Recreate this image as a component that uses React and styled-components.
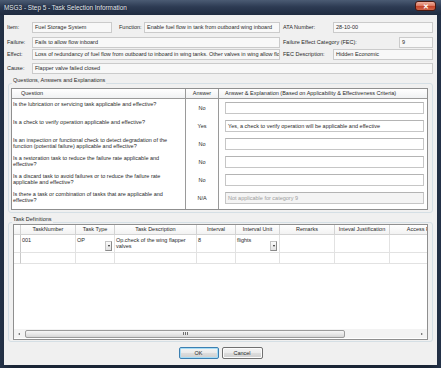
import React from "react";
import styled, { createGlobalStyle } from "styled-components";

const GlobalStyle = createGlobalStyle`
  html, body {
    margin: 0;
    padding: 0;
    overflow: hidden;
    background: #1b2638;
  }
  body {
    font-family: "Liberation Sans", Arial, sans-serif;
    color: #2a2a2a;
  }
`;

// window chrome
const Window = styled.div`
  width: 441px;
  height: 368px;
  box-sizing: border-box;
  display: flex;
  flex-direction: column;
  padding: 0 4px 3px 4px;
  background: linear-gradient(to right, #243248 0%, #1a2535 3%, #1a2535 97%, #243248 100%);
`;

const TitleBar = styled.div`
  height: 15px;
  flex: none;
  display: flex;
  align-items: center;
  justify-content: space-between;
  margin: 0 -4px;
  padding: 0 5px 0 4px;
  background: linear-gradient(to bottom, #4b5b73 0%, #2d3b53 45%, #1f2b40 100%);
`;

const Title = styled.span`
  font-family: "Liberation Sans", Arial, sans-serif;
  font-size: 6.4px;
  color: #e4e9ef;
  text-shadow: 0 0 2px #0b1320;
  white-space: nowrap;
`;

const CloseButton = styled.div`
  width: 21px;
  height: 10px;
  align-self: flex-start;
  margin-top: 1px;
  box-sizing: border-box;
  border: 1px solid #4a1810;
  border-radius: 3px;
  background: linear-gradient(to bottom, #eeb0a0 0%, #dc7a62 45%, #c4442a 55%, #d0664a 100%);
  display: flex;
  align-items: center;
  justify-content: center;
  color: #fff;
  font-size: 7px;
  font-weight: bold;
  line-height: 1;
`;

const Panel = styled.div`
  flex: 1;
  display: flex;
  flex-direction: column;
  background: #f0f0f0;
  padding: 7px 4px 0 4px;
  font-size: 5.5px;
`;

// top form
const Form = styled.div`
  display: flex;
  flex-direction: column;
  margin-left: -1px;
`;

const FormRow = styled.div`
  display: flex;
  align-items: center;
  height: 11px;
  margin-top: ${(p) => p.$gap || 0}px;
`;

const FieldLabel = styled.span`
  flex: none;
  width: ${(p) => p.$w}px;
  box-sizing: border-box;
  padding-left: ${(p) => p.$pl || 0}px;
  white-space: nowrap;
  line-height: 11px;
`;

const Field = styled.div`
  flex: none;
  width: ${(p) => p.$w}px;
  height: 11px;
  box-sizing: border-box;
  border: 1px solid #cbcbcb;
  background: #f8f8f8;
  padding: 0 2px;
  line-height: 9px;
  white-space: nowrap;
  overflow: hidden;
`;

// group boxes
const Group = styled.div`
  position: relative;
  margin-top: ${(p) => p.$mt}px;
  border: 1px solid #d5dfe5;
  border-radius: 3px;
  padding: ${(p) => p.$pad};
`;

const Caption = styled.span`
  position: absolute;
  top: -7px;
  left: 3px;
  padding: 0 1px;
  background: #f0f0f0;
  line-height: 7px;
  white-space: nowrap;
`;

// questions table
const QTable = styled.div`
  height: 122px;
  box-sizing: border-box;
  display: flex;
  flex-direction: column;
  border: 1px solid #8f8f8f;
  background: #fff;
`;

const QRow = styled.div`
  display: grid;
  grid-template-columns: 174px 33px 1fr;
  height: ${(p) => (p.$h ? `${p.$h}px` : "auto")};
  flex: ${(p) => (p.$fill ? 1 : "none")};
`;

const QHead = styled.div`
  box-sizing: border-box;
  border-right: ${(p) => (p.$last ? "none" : "1px solid #9a9a9a")};
  border-bottom: 1px solid #9a9a9a;
  background: linear-gradient(to bottom, #ffffff, #f0f1f3);
  line-height: 9px;
  padding-left: ${(p) => p.$pl || 0}px;
  text-align: ${(p) => p.$align || "left"};
  white-space: nowrap;
  overflow: hidden;
`;

const QCell = styled.div`
  box-sizing: border-box;
  border-right: ${(p) => (p.$last ? "none" : "1px solid #9a9a9a")};
  display: flex;
  align-items: ${(p) => (p.$top ? "flex-start" : "center")};
  justify-content: ${(p) => (p.$center ? "center" : "flex-start")};
  padding: ${(p) => p.$pad || 0};
  line-height: 6px;
`;

const AnswerBox = styled.div`
  flex: 1;
  height: 12px;
  box-sizing: border-box;
  border: 1px solid #c6c6c6;
  border-top-color: #b4b4b4;
  background: ${(p) => (p.$disabled ? "#f4f4f4" : "#fff")};
  color: ${(p) => (p.$disabled ? "#9d9d9d" : "#2a2a2a")};
  padding: 0 2px;
  line-height: 10px;
  white-space: nowrap;
  overflow: hidden;
`;

// task grid
const TaskGrid = styled.div`
  height: 116px;
  box-sizing: border-box;
  display: flex;
  flex-direction: column;
  border: 1px solid #8f8f8f;
  background: #fff;
  overflow: hidden;
`;

const TRow = styled.div`
  display: grid;
  grid-template-columns: 7px 55px 39px 82px 39px 44px 55px 55px 88px;
  height: ${(p) => p.$h}px;
  flex: none;
`;

const THead = styled.div`
  box-sizing: border-box;
  border-right: 1px solid #d3d3d3;
  border-bottom: 1px solid #d3d3d3;
  background: linear-gradient(to bottom, #ffffff, #f2f2f2);
  line-height: 9px;
  text-align: center;
  white-space: nowrap;
  overflow: hidden;
`;

const TCell = styled.div`
  box-sizing: border-box;
  border-right: 1px solid ${(p) => (p.$sel ? "#c9c9c9" : "#e2e2e2")};
  border-bottom: 1px solid #e2e2e2;
  padding: 2px 2px 1px 1px;
  line-height: 6px;
  display: flex;
  justify-content: space-between;
  overflow: hidden;
`;

const DropButton = styled.div`
  flex: none;
  align-self: flex-end;
  width: 7px;
  height: 10px;
  box-sizing: border-box;
  border: 1px solid #c4c4c4;
  border-right-color: #8a8a8a;
  border-bottom-color: #8a8a8a;
  background: linear-gradient(to bottom, #fafafa, #e2e2e2);
  display: flex;
  align-items: center;
  justify-content: center;

  &::after {
    content: "";
    border-left: 1.5px solid transparent;
    border-right: 1.5px solid transparent;
    border-top: 2px solid #222;
  }
`;

const GridSpace = styled.div`
  flex: 1;
`;

const HScroll = styled.div`
  height: 9px;
  flex: none;
  margin-bottom: 1px;
  display: flex;
  align-items: center;
  background: #f3f3f3;
`;

const ScrollArrow = styled.div`
  width: 10px;
  height: 9px;
  flex: none;
  display: flex;
  align-items: center;
  justify-content: center;

  &::after {
    content: "";
    border-top: 1.5px solid transparent;
    border-bottom: 1.5px solid transparent;
    ${(p) => (p.$right ? "border-left: 2px solid #555;" : "border-right: 2px solid #555;")}
  }
`;

const ScrollThumb = styled.div`
  width: 320px;
  height: 8px;
  box-sizing: border-box;
  margin-left: 1px;
  border: 1px solid #9b9b9b;
  border-radius: 2px;
  background: linear-gradient(to bottom, #f6f6f6 0%, #e8e8e8 50%, #d6d6d6 100%);
  display: flex;
  align-items: center;
  justify-content: center;
`;

const Grip = styled.div`
  width: 5px;
  height: 3px;
  background: repeating-linear-gradient(to right, #6f6f6f 0 1px, transparent 1px 2px);
`;

const ScrollTrack = styled.div`
  flex: 1;
`;

// buttons
const ButtonRow = styled.div`
  display: flex;
  justify-content: center;
  gap: 3px;
  margin-top: 5px;
`;

const Button = styled.div`
  width: ${(p) => p.$w}px;
  height: 12px;
  box-sizing: border-box;
  border: 1px solid ${(p) => (p.$default ? "#3c7fb1" : "#707070")};
  border-radius: 2px;
  background: linear-gradient(to bottom, #f4f4f4 0%, #ebebeb 48%, #dddddd 52%, #cfcfcf 100%);
  box-shadow: ${(p) => (p.$default ? "inset 0 0 0 1px #a6dcf6" : "inset 0 0 0 1px #fbfbfb")};
  display: flex;
  align-items: center;
  justify-content: center;
  font-size: 5.5px;
`;

const questions = [
  { q: "Is the lubrication or servicing task applicable and effective?", a: "No", e: "" },
  { q: "Is a check to verify operation applicable and effective?", a: "Yes", e: "Yes, a check to verify operation will be applicable and effective" },
  { q: "Is an inspection or functional check to detect degradation of the function (potential failure) applicable and effective?", a: "No", e: "" },
  { q: "Is a restoration task to reduce the failure rate applicable and effective?", a: "No", e: "" },
  { q: "Is a discard task to avoid failures or to reduce the failure rate applicable and effective?", a: "No", e: "" },
  { q: "Is there a task or combination of tasks that are applicable and effective?", a: "N/A", e: "Not applicable for category 9", disabled: true },
];

const taskCols = [
  "",
  "TaskNumber",
  "Task Type",
  "Task Description",
  "Interval",
  "Interval Unit",
  "Remarks",
  "Inteval Justification",
  "Access Requirements",
];

const Dialog = () => (
  <Window>
    <TitleBar>
      <Title>MSG3 - Step 5 - Task Selection Information</Title>
      <CloseButton>✕</CloseButton>
    </TitleBar>
    <Panel>
      <Form>
        <FormRow>
          <FieldLabel $w={25}>Item:</FieldLabel>
          <Field $w={80}>Fuel Storage System</Field>
          <FieldLabel $w={32} $pl={7}>Function:</FieldLabel>
          <Field $w={136}>Enable fuel flow in tank from outboard wing inboard</Field>
          <FieldLabel $w={53} $pl={3}>ATA Number:</FieldLabel>
          <Field $w={100}>28-10-00</Field>
        </FormRow>
        <FormRow $gap={4}>
          <FieldLabel $w={25}>Failure:</FieldLabel>
          <Field $w={248}>Fails to allow flow inboard</Field>
          <FieldLabel $w={119} $pl={3}>Failure Effect Category (FEC):</FieldLabel>
          <Field $w={34}>9</Field>
        </FormRow>
        <FormRow $gap={1}>
          <FieldLabel $w={25}>Effect:</FieldLabel>
          <Field $w={248}>
            Loss of redundancy of fuel flow from outboard to inboard in wing tanks. Other valves in wing allow flow
          </Field>
          <FieldLabel $w={53} $pl={3}>FEC Description:</FieldLabel>
          <Field $w={100}>Hidden Economic</Field>
        </FormRow>
        <FormRow $gap={3}>
          <FieldLabel $w={25}>Cause:</FieldLabel>
          <Field $w={401}>Flapper valve failed closed</Field>
        </FormRow>
      </Form>

      <Group $mt={9} $pad="4px 4px 2px 2px">
        <Caption>Questions, Answers and Explanations</Caption>
        <QTable>
          <QRow $h={10}>
            <QHead $pl={9}>Question</QHead>
            <QHead $align="center">Answer</QHead>
            <QHead $pl={6} $last>
              Answer &amp; Explanation (Based on Applicability &amp; Effectiveness Criteria)
            </QHead>
          </QRow>
          {questions.map((r) => (
            <QRow key={r.q} $h={18}>
              <QCell $top $pad="2px 8px 0 1px">{r.q}</QCell>
              <QCell $center>{r.a}</QCell>
              <QCell $last $pad="0 3px 0 6px">
                <AnswerBox $disabled={r.disabled}>{r.e}</AnswerBox>
              </QCell>
            </QRow>
          ))}
          <QRow $fill>
            <QCell />
            <QCell />
            <QCell $last />
          </QRow>
        </QTable>
      </Group>

      <Group $mt={9} $pad="1px 4px 1px 4px">
        <Caption>Task Definitions</Caption>
        <TaskGrid>
          <TRow $h={10}>
            {taskCols.map((c, i) => (
              <THead key={i}>{c}</THead>
            ))}
          </TRow>
          <TRow $h={18}>
            <TCell $sel />
            <TCell>001</TCell>
            <TCell>
              OP
              <DropButton />
            </TCell>
            <TCell>Op.check of the wing flapper valves</TCell>
            <TCell>8</TCell>
            <TCell>
              flights
              <DropButton />
            </TCell>
            <TCell />
            <TCell />
            <TCell />
          </TRow>
          <TRow $h={11}>
            <TCell $sel />
            <TCell />
            <TCell />
            <TCell />
            <TCell />
            <TCell />
            <TCell />
            <TCell />
            <TCell />
          </TRow>
          <GridSpace />
          <HScroll>
            <ScrollArrow />
            <ScrollThumb>
              <Grip />
            </ScrollThumb>
            <ScrollTrack />
            <ScrollArrow $right />
          </HScroll>
        </TaskGrid>
      </Group>

      <ButtonRow>
        <Button $w={40} $default>OK</Button>
        <Button $w={41}>Cancel</Button>
      </ButtonRow>
    </Panel>
  </Window>
);

export default function App() {
  return (
    <>
      <GlobalStyle />
      <Dialog />
    </>
  );
}
